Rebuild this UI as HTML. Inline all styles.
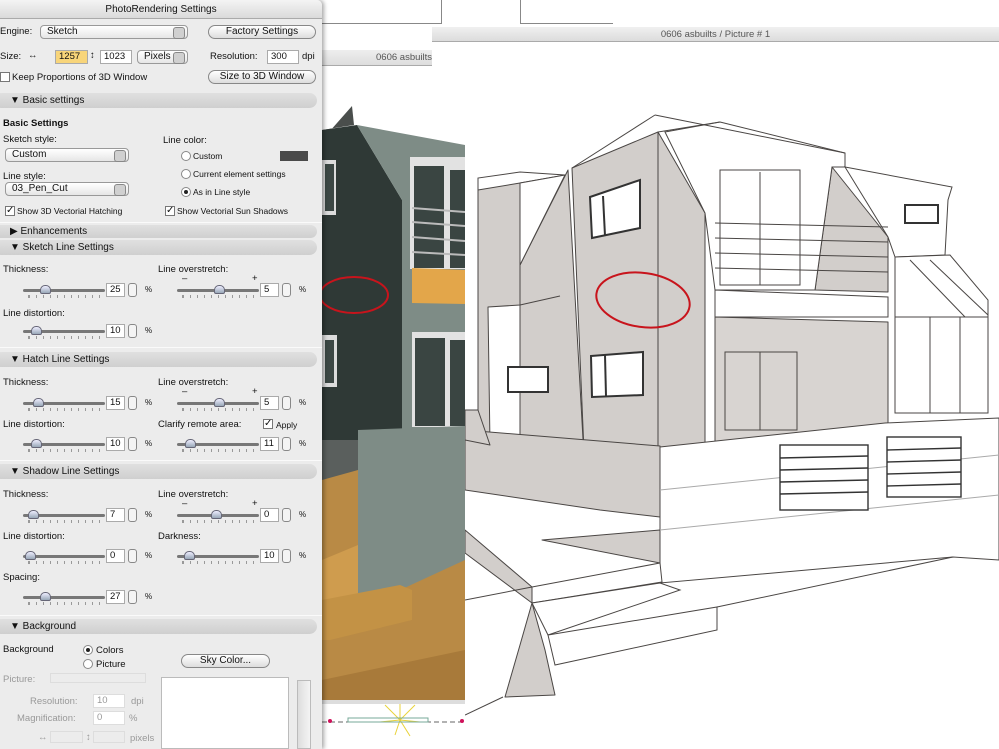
<!DOCTYPE html>
<html><head><meta charset="utf-8"><style>
*{margin:0;padding:0;box-sizing:border-box}
body{width:999px;height:749px;overflow:hidden;background:#fff;font-family:"Liberation Sans","DejaVu Sans",sans-serif;font-size:9.5px;color:#111;position:relative}
.a{position:absolute;white-space:nowrap}
#panel{position:absolute;left:0;top:0;width:322px;height:749px;background:#ececec;box-shadow:2px 0 4px rgba(0,0,0,.35);overflow:hidden;border-top-right-radius:5px}
.bar{position:absolute;left:-6px;width:323px;height:15px;border-radius:8px;background:linear-gradient(#e0e0e0,#cfcfcf);padding-left:16px;line-height:15px;font-size:10px}
.pop{position:absolute;height:14px;border:1px solid #999;border-radius:4px;background:linear-gradient(#fff,#e6e6e6);padding-left:6px;line-height:12px;font-size:10px}
.pop:after{content:"";position:absolute;right:2px;top:1px;width:10px;height:10px;border-radius:3px;background:#d0d0d0;border:1px solid #888}
.btn{position:absolute;height:14px;border:1px solid #888;border-radius:7px;background:linear-gradient(#fff,#ddd);text-align:center;line-height:12px;font-size:10px}
.fld{position:absolute;height:14px;background:#fff;border:1px solid #aaa;padding-left:3px;line-height:12px;font-size:9.5px}
.rad{position:absolute;width:10px;height:10px;border-radius:50%;border:1px solid #888;background:#fff}
.rad.on:after{content:"";position:absolute;left:2px;top:2px;width:4px;height:4px;border-radius:50%;background:#222}
.chk{position:absolute;width:10px;height:10px;border:1px solid #777;background:#fff;font-size:10px;line-height:8px;text-align:center;font-weight:bold}
.sep{position:absolute;left:0;width:322px;height:1px;background:#c4c4c4;border-bottom:1px solid #fafafa}
.trk{position:absolute;height:3px;background:#777;border-radius:2px}
.tks{position:absolute;height:3px;border-left:1px solid #999;background:repeating-linear-gradient(90deg,#999 0 1px,transparent 1px 7px)}
.thm{position:absolute;width:11px;height:9px;border-radius:5px 5px 2px 2px;background:linear-gradient(#eef,#99a8b8);border:1px solid #667}
.stp{position:absolute;width:9px;height:14px;border:1px solid #888;border-radius:3px;background:#f4f4f4}
.g{color:#999}
</style></head><body>

<div class="a" style="left:322px;top:0;width:677px;height:27px;background:#fff"></div>
<div class="a" style="left:322px;top:23px;width:120px;height:1px;background:#888"></div>
<div class="a" style="left:441px;top:0;width:1px;height:24px;background:#888"></div>
<div class="a" style="left:520px;top:0;width:1px;height:24px;background:#888"></div>
<div class="a" style="left:520px;top:23px;width:93px;height:1px;background:#888"></div>
<div class="a" style="left:432px;top:27px;width:567px;height:15px;background:linear-gradient(#f0f0f0,#dcdcdc);border-bottom:1px solid #aaa;text-align:center;line-height:15px;color:#555;font-size:9.5px">0606 asbuilts / Picture # 1</div>
<div class="a" style="left:322px;top:50px;width:110px;height:16px;background:linear-gradient(#eee,#ddd);border-bottom:1px solid #aaa;text-align:right;line-height:16px;color:#555;font-size:9.5px">0606 asbuilts</div>

<svg class="a" style="left:322px;top:66px" width="143" height="683" viewBox="322 66 143 683">
<rect x="322" y="66" width="143" height="683" fill="#fff"/>
<polygon points="322,140 352,106 354,125 322,130" fill="#4a4e4c"/>
<polygon points="322,130 357,125 402,200 402,440 358,440 358,470 322,470" fill="#2f3936"/>
<polygon points="357,125 465,145 465,430 402,430 402,200" fill="#7e8c86"/>
<rect x="322" y="160" width="14" height="55" fill="#dcdcdc"/><rect x="325" y="164" width="9" height="47" fill="#3c4744"/>
<rect x="322" y="335" width="15" height="52" fill="#dcdcdc"/><rect x="325" y="340" width="9" height="43" fill="#3c4744"/>
<rect x="410" y="157" width="55" height="112" fill="#e2e2e2"/><rect x="414" y="166" width="30" height="102" fill="#3a4542"/><rect x="450" y="170" width="15" height="98" fill="#3a4542"/>
<g stroke="#bbb" stroke-width="2"><line x1="412" y1="208" x2="465" y2="212"/><line x1="412" y1="222" x2="465" y2="226"/><line x1="412" y1="237" x2="465" y2="241"/><line x1="412" y1="252" x2="465" y2="255"/></g>
<polygon points="412,268 465,270 465,304 412,303" fill="#e3a64a"/>
<rect x="412" y="332" width="53" height="95" fill="#e2e2e2"/><rect x="415" y="338" width="30" height="88" fill="#3a4542"/><rect x="450" y="340" width="15" height="86" fill="#3a4542"/>
<polygon points="322,470 465,470 465,700 322,700" fill="#b98a45"/>
<polygon points="322,440 358,440 358,470 322,480" fill="#5a5f5d"/>
<polygon points="358,430 465,426 465,560 400,590 358,600" fill="#7e8c86"/>
<polygon points="322,560 358,545 358,600 322,610" fill="#cf9c4e"/>
<polygon points="322,600 400,585 412,590 412,620 330,640 322,640" fill="#c39245"/>
<polygon points="322,680 465,650 465,700 322,700" fill="#a87a3a"/>
<rect x="322" y="700" width="143" height="4" fill="#ddd"/>
<rect x="322" y="704" width="143" height="45" fill="#fff"/>
<g stroke="#e8d23a" stroke-width="1"><line x1="400" y1="720" x2="385" y2="705"/><line x1="400" y1="720" x2="415" y2="705"/><line x1="400" y1="720" x2="395" y2="735"/><line x1="400" y1="720" x2="410" y2="736"/><line x1="400" y1="720" x2="380" y2="722"/><line x1="400" y1="720" x2="420" y2="722"/><line x1="400" y1="720" x2="400" y2="704"/></g>
<line x1="322" y1="722" x2="465" y2="722" stroke="#666" stroke-dasharray="5 3"/>
<rect x="348" y="718" width="80" height="4" fill="none" stroke="#7a9" stroke-width="1"/>
<circle cx="330" cy="721" r="2" fill="#d0105a"/><circle cx="462" cy="721" r="2" fill="#d0105a"/>
<ellipse cx="354" cy="295" rx="34" ry="18" fill="none" stroke="#c8141c" stroke-width="2"/>
</svg>

<svg class="a" style="left:465px;top:43px" width="534" height="706" viewBox="465 43 534 706">
<rect x="465" y="43" width="534" height="706" fill="#fff"/>
<g fill="#d2cecb" stroke="#4a4644" stroke-width="1" stroke-linejoin="round">
<polygon points="478,190 520,183 565,175 520,265 520,305 488,307 490,445 478,440"/>
<polygon points="520,265 568,170 585,475 520,460"/>
<polygon points="572,168 658,132 658,460 585,475"/>
<polygon points="658,132 705,213 705,445 658,460"/>
<polygon points="715,317 888,322 888,430 780,438 715,445" fill="#d8d4d1"/>
<polygon points="832,167 888,237 888,292 815,290"/>
<polygon points="465,430 660,446 660,517 600,510 465,490"/>
<polygon points="542,540 660,563 660,530"/>
<polygon points="465,530 532,587 532,603 465,553"/>
<polygon points="532,603 545,650 555,695 505,697 520,645"/>
<polygon points="465,410 478,410 490,445 465,440"/>
</g>
<g fill="#fff" stroke="#4a4644" stroke-width="1">
<polygon points="520,183 565,175 520,265"/>
<polygon points="720,122 845,153 845,167 832,167 815,290 715,290 705,213 665,132"/>
<polygon points="715,290 888,297 888,317 715,317"/>
<polygon points="845,167 952,187 948,200 945,255 895,257 888,237"/>
<polygon points="895,257 950,255 988,300 988,317 895,317"/>
<polygon points="895,317 988,317 988,413 895,413"/>
<polygon points="660,447 885,423 999,418 999,560 953,557 660,583"/>
<polygon points="532,587 660,563 662,582 532,603"/>
<polygon points="532,603 660,583 680,590 548,635"/>
<polygon points="548,635 717,607 717,630 555,665"/>
</g>
<g fill="none" stroke="#4a4644" stroke-width="1">
<polyline points="655,115 845,153"/><polyline points="655,115 572,168"/><polyline points="658,132 720,122"/>
<polyline points="478,190 478,178 520,172 565,175"/>
<rect x="720" y="170" width="80" height="115"/><line x1="760" y1="172" x2="760" y2="285"/>
<line x1="715" y1="223" x2="888" y2="227"/><line x1="715" y1="238" x2="888" y2="242"/><line x1="715" y1="253" x2="888" y2="257"/><line x1="715" y1="268" x2="888" y2="272"/>
<rect x="725" y="352" width="72" height="78"/><line x1="760" y1="352" x2="760" y2="430"/>
<line x1="930" y1="260" x2="988" y2="315"/><line x1="910" y1="260" x2="965" y2="317"/>
<line x1="930" y1="317" x2="930" y2="413"/><line x1="960" y1="317" x2="960" y2="413"/>
<line x1="520" y1="305" x2="560" y2="296"/>
<line x1="660" y1="490" x2="999" y2="455" stroke="#aaa"/><line x1="660" y1="530" x2="999" y2="495" stroke="#aaa"/>
<line x1="717" y1="607" x2="953" y2="557"/>
<line x1="465" y1="600" x2="532" y2="587"/><line x1="465" y1="715" x2="503" y2="697"/>
</g>
<g fill="#fff" stroke="#333" stroke-width="2">
<polygon points="590,197 640,180 640,228 592,238"/><line x1="603" y1="196" x2="605" y2="236"/>
<polygon points="591,356 643,352 643,395 592,397"/><line x1="605" y1="355" x2="606" y2="396"/>
<rect x="508" y="367" width="40" height="25"/>
<rect x="905" y="205" width="33" height="18"/>
</g>
<g fill="#fff" stroke="#333" stroke-width="1.4">
<rect x="780" y="445" width="88" height="65"/>
<line x1="780" y1="458" x2="868" y2="456"/><line x1="780" y1="470" x2="868" y2="468"/><line x1="780" y1="482" x2="868" y2="480"/><line x1="780" y1="494" x2="868" y2="492"/>
<rect x="887" y="437" width="74" height="60"/>
<line x1="887" y1="450" x2="961" y2="448"/><line x1="887" y1="462" x2="961" y2="460"/><line x1="887" y1="474" x2="961" y2="472"/><line x1="887" y1="486" x2="961" y2="484"/>
</g>
<ellipse cx="643" cy="300" rx="47" ry="27" transform="rotate(8 643 300)" fill="none" stroke="#c8141c" stroke-width="2"/>
</svg>

<div id="panel">
<div class="a" style="left:0;top:0;width:322px;height:19px;background:linear-gradient(#f4f4f4,#dadada);border-bottom:1px solid #aaa;text-align:center;line-height:19px;font-size:10px">PhotoRendering Settings</div>
<div class="a" style="left:0;top:26px">Engine:</div>
<div class="pop" style="left:40px;top:25px;width:148px">Sketch</div>
<div class="btn" style="left:208px;top:25px;width:108px">Factory Settings</div>
<div class="a" style="left:0;top:51px">Size:</div>
<div class="a" style="left:28px;top:50px">↔</div>
<div class="fld" style="left:55px;top:50px;width:33px;background:#f8d57a">1257</div>
<div class="a" style="left:90px;top:50px">↕</div>
<div class="fld" style="left:100px;top:50px;width:32px">1023</div>
<div class="pop" style="left:137px;top:50px;width:51px">Pixels</div>
<div class="a" style="left:210px;top:51px">Resolution:</div>
<div class="fld" style="left:267px;top:50px;width:32px">300</div>
<div class="a" style="left:302px;top:51px">dpi</div>
<div class="chk" style="left:0;top:72px"></div>
<div class="a" style="left:12px;top:72px">Keep Proportions of 3D Window</div>
<div class="btn" style="left:208px;top:70px;width:108px">Size to 3D Window</div>
<div class="bar" style="top:93px">▼ Basic settings</div>
<div class="a" style="left:3px;top:118px;font-weight:bold">Basic Settings</div>
<div class="a" style="left:3px;top:134px">Sketch style:</div>
<div class="pop" style="left:5px;top:148px;width:124px">Custom</div>
<div class="a" style="left:3px;top:171px">Line style:</div>
<div class="pop" style="left:5px;top:182px;width:124px">03_Pen_Cut</div>
<div class="a" style="left:163px;top:135px">Line color:</div>
<div class="rad" style="left:181px;top:151px"></div><div class="a" style="left:193px;top:151px;font-size:8.5px">Custom</div>
<div class="a" style="left:280px;top:151px;width:28px;height:10px;background:#4a4a4a"></div>
<div class="rad" style="left:181px;top:169px"></div><div class="a" style="left:193px;top:169px;font-size:8.5px">Current element settings</div>
<div class="rad on" style="left:181px;top:187px"></div><div class="a" style="left:193px;top:187px;font-size:8.5px">As in Line style</div>
<div class="chk" style="left:5px;top:206px">✓</div><div class="a" style="left:17px;top:206px;font-size:8.5px">Show 3D Vectorial Hatching</div>
<div class="chk" style="left:165px;top:206px">✓</div><div class="a" style="left:177px;top:206px;font-size:8.5px">Show Vectorial Sun Shadows</div>
<div class="sep" style="top:222px"></div>
<div class="bar" style="top:225px;height:13px;line-height:13px">▶ Enhancements</div>
<div class="bar" style="top:240px">▼ Sketch Line Settings</div>
<div class="sep" style="top:347px"></div>
<div class="bar" style="top:352px">▼ Hatch Line Settings</div>
<div class="sep" style="top:460px"></div>
<div class="bar" style="top:464px">▼ Shadow Line Settings</div>
<div class="sep" style="top:615px"></div>
<div class="bar" style="top:619px">▼ Background</div>
<div class="a" style="left:3px;top:644px">Background</div>
<div class="rad on" style="left:83px;top:645px"></div><div class="a" style="left:96px;top:645px">Colors</div>
<div class="rad" style="left:83px;top:659px"></div><div class="a" style="left:96px;top:659px">Picture</div>
<div class="btn" style="left:181px;top:654px;width:89px">Sky Color...</div>
<div class="a g" style="left:3px;top:674px">Picture:</div>
<div class="a" style="left:50px;top:673px;width:96px;height:10px;border:1px solid #ddd"></div>
<div class="a" style="left:161px;top:677px;width:128px;height:72px;background:#fff;border:1px solid #bbb"></div>
<div class="a" style="left:297px;top:680px;width:14px;height:69px;background:linear-gradient(90deg,#ddd,#f4f4f4);border:1px solid #bbb"></div>
<div class="a g" style="left:30px;top:696px">Resolution:</div><div class="fld g" style="left:93px;top:694px;width:32px;border-color:#ddd">10</div><div class="a g" style="left:131px;top:696px">dpi</div>
<div class="a g" style="left:17px;top:713px">Magnification:</div><div class="fld g" style="left:93px;top:711px;width:32px;border-color:#ddd">0</div><div class="a g" style="left:129px;top:713px">%</div>
<div class="a g" style="left:38px;top:732px">↔</div><div class="a" style="left:50px;top:731px;width:33px;height:12px;border:1px solid #ddd"></div><div class="a g" style="left:86px;top:732px">↕</div><div class="a" style="left:93px;top:731px;width:32px;height:12px;border:1px solid #ddd"></div><div class="a g" style="left:130px;top:733px">pixels</div>
</div>
<script>
var P=document.getElementById('panel');
function t(x,y,s){var d=document.createElement('div');d.className='a';d.style.left=x+'px';d.style.top=y+'px';d.textContent=s;P.appendChild(d);}
function sl(x,y,th,v,pm){var h='';
h+='<div class="trk" style="left:'+x+'px;top:'+(y-1)+'px;width:82px"></div>';
h+='<div class="tks" style="left:'+(x+5)+'px;top:'+(y+5)+'px;width:72px"></div>';
h+='<div class="thm" style="left:'+(th-5)+'px;top:'+(y-5)+'px"></div>';
h+='<div class="fld" style="left:'+(x+83)+'px;top:'+(y-7)+'px;width:19px">'+v+'</div>';
h+='<div class="stp" style="left:'+(x+105)+'px;top:'+(y-7)+'px"></div>';
h+='<div class="a" style="left:'+(x+122)+'px;top:'+(y-5)+'px;font-size:8px">%</div>';
if(pm)h+='<div class="a" style="left:'+(x+5)+'px;top:'+(y-17)+'px">–</div><div class="a" style="left:'+(x+75)+'px;top:'+(y-17)+'px">+</div>';
P.insertAdjacentHTML('beforeend',h);}
t(3,264,'Thickness:');t(158,264,'Line overstretch:');sl(23,290,45,'25');sl(177,290,219,'5',1);
t(3,308,'Line distortion:');sl(23,331,36,'10');
t(3,377,'Thickness:');t(158,377,'Line overstretch:');sl(23,403,38,'15');sl(177,403,219,'5',1);
t(3,419,'Line distortion:');t(158,419,'Clarify remote area:');sl(23,444,36,'10');sl(177,444,190,'11');
P.insertAdjacentHTML('beforeend','<div class="chk" style="left:263px;top:419px">✓</div><div class="a" style="left:276px;top:420px;font-size:8.5px">Apply</div>');
t(3,489,'Thickness:');t(158,489,'Line overstretch:');sl(23,515,33,'7');sl(177,515,216,'0',1);
t(3,531,'Line distortion:');t(158,531,'Darkness:');sl(23,556,30,'0');sl(177,556,189,'10');
t(3,572,'Spacing:');sl(23,597,45,'27');
</script>
</body></html>
